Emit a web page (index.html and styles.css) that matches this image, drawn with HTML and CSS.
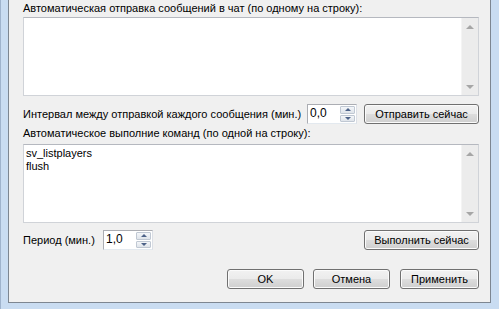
FILE: index.html
```html
<!DOCTYPE html>
<html lang="ru">
<head>
<meta charset="UTF-8">
<title>Автоматизация</title>
<link rel="stylesheet" href="styles.css">
</head>
<body>
<div class="window">
    <div class="client">
        <div class="label">Автоматическая отправка сообщений в чат (по одному на строку):</div>
        <div class="textbox">
            <div class="text"></div>
            <div class="vscroll">
                <span class="scroll-btn"><span class="tri-up"></span></span>
                <span class="track"></span>
                <span class="scroll-btn"><span class="tri-down"></span></span>
            </div>
        </div>

        <div class="row row-interval">
            <span class="row-label interval-label">Интервал между отправкой каждого сообщения (мин.)</span>
            <div class="spin">
                <span class="spin-value">0,0</span>
                <span class="spin-buttons">
                    <span class="spin-btn"><span class="spin-up"></span></span>
                    <span class="spin-btn"><span class="spin-down"></span></span>
                </span>
            </div>
            <button class="btn btn-wide">Отправить сейчас</button>
        </div>

        <div class="label label-second">Автоматическое выполние команд (по одной на строку):</div>
        <div class="textbox textbox-second">
            <div class="text">sv_listplayers<br>flush</div>
            <div class="vscroll">
                <span class="scroll-btn"><span class="tri-up"></span></span>
                <span class="track"></span>
                <span class="scroll-btn"><span class="tri-down"></span></span>
            </div>
        </div>

        <div class="row row-period">
            <span class="row-label period-label">Период (мин.)</span>
            <div class="spin">
                <span class="spin-value">1,0</span>
                <span class="spin-buttons">
                    <span class="spin-btn"><span class="spin-up"></span></span>
                    <span class="spin-btn"><span class="spin-down"></span></span>
                </span>
            </div>
            <button class="btn btn-wide">Выполнить сейчас</button>
        </div>

        <div class="dialog-buttons">
            <button class="btn btn-ok">OK</button>
            <button class="btn btn-cancel">Отмена</button>
            <button class="btn btn-apply">Применить</button>
        </div>
    </div>
</div>
</body>
</html>
```

FILE: styles.css
```css
* {
    box-sizing: border-box;
}
body {
    margin: 0;
    background-color: #fff;
    font-family: "Liberation Sans", Arial, sans-serif;
    font-size: 11px;
    color: #000;
}
.window {
    width: 499px;
    height: 309px;
    padding: 0 8px 6px 7px;
    background-color: #c9dcf1;
    border-left: 1px solid #9fb3cc;
}
.client {
    height: 100%;
    display: flex;
    flex-direction: column;
    padding: 0 11px 0 14px;
    background-color: #f0f0f0;
    border: 1px solid #7d8691;
    border-top: none;
}
.label {
    margin-top: 2px;
    line-height: 13px;
    white-space: nowrap;
}
.label-second {
    margin-top: 3px;
}
.textbox {
    display: flex;
    height: 79px;
    margin-top: 2px;
    background-color: #fff;
    border: 1px solid #d0d3d8;
    border-top-color: #b5b8bf;
}
.textbox-second {
    margin-top: 4px;
}
.text {
    flex: 1;
    padding: 2px 2px;
    line-height: 13px;
}
.vscroll {
    width: 17px;
    display: flex;
    flex-direction: column;
    background-color: #ececec;
    border-left: 1px solid #f4f4f4;
}
.scroll-btn {
    height: 17px;
    display: flex;
    align-items: center;
    justify-content: center;
}
.track {
    flex: 1;
}
.tri-up, .tri-down {
    width: 0;
    height: 0;
    border-left: 4px solid transparent;
    border-right: 4px solid transparent;
}
.tri-up {
    border-bottom: 4px solid #a6a6a6;
}
.tri-down {
    border-top: 4px solid #a6a6a6;
}
.row {
    display: flex;
    align-items: center;
    height: 20px;
}
.row-interval {
    margin-top: 8px;
}
.row-period {
    margin-top: 7px;
}
.row-label {
    flex: none;
    white-space: nowrap;
}
.interval-label {
    width: 284px;
}
.period-label {
    width: 80px;
}
.spin {
    width: 50px;
    height: 20px;
    display: flex;
    align-items: stretch;
    background-color: #fff;
    border: 1px solid #abadb3;
    border-right-color: #dbdfe6;
    border-bottom-color: #e3e9ef;
}
.spin-value {
    flex: 1;
    padding-left: 2px;
    font-size: 12px;
    line-height: 17px;
}
.spin-buttons {
    width: 16px;
    display: flex;
    flex-direction: column;
    padding: 1px 1px 1px 0;
    gap: 1px;
}
.spin-btn {
    flex: 1;
    display: flex;
    align-items: center;
    justify-content: center;
    background: linear-gradient(#f4f6f9, #dfe4ea);
    border: 1px solid #c0c8d3;
    border-radius: 1px;
}
.spin-up, .spin-down {
    width: 0;
    height: 0;
    border-left: 3px solid transparent;
    border-right: 3px solid transparent;
}
.spin-up {
    border-bottom: 3px solid #4d6288;
}
.spin-down {
    border-top: 3px solid #4d6288;
}
.btn {
    height: 20px;
    padding: 0;
    font-family: "Liberation Sans", Arial, sans-serif;
    font-size: 11px;
    color: #000;
    background: linear-gradient(#f2f2f2 0%, #ebebeb 48%, #dddddd 52%, #cfcfcf 100%);
    border: 1px solid #707070;
    border-radius: 3px;
    box-shadow: inset 0 0 0 1px #fbfbfb;
}
.btn-wide {
    width: 115px;
    margin-left: auto;
}
.dialog-buttons {
    display: flex;
    justify-content: flex-end;
    gap: 9px;
    margin-top: 19px;
}
.btn-ok, .btn-cancel {
    width: 77px;
}
.btn-apply {
    width: 79px;
    margin-left: 1px;
}
```
